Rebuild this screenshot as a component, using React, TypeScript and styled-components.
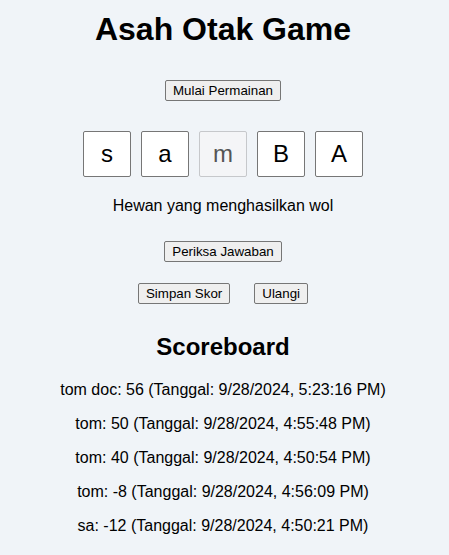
import React, { useState } from "react";
import styled, { createGlobalStyle } from "styled-components";

const GlobalStyle = createGlobalStyle`
  html, body {
    margin: 0;
    padding: 0;
    background: #f0f4f8;
  }
  body {
    font-family: "Liberation Sans", Arial, sans-serif;
    color: #000;
  }
`;

const Page = styled.div`
  box-sizing: border-box;
  width: 446px;
  padding-top: 11px;
  text-align: center;
  font-family: "Liberation Sans", Arial, sans-serif;
`;

const Title = styled.h1`
  margin: 0 0 32px;
  font-size: 32px;
  line-height: 37px;
  font-weight: bold;
`;

const Row = styled.div<{ $gap?: number; $mb?: number }>`
  display: flex;
  justify-content: center;
  gap: ${(p) => p.$gap ?? 0}px;
  margin-bottom: ${(p) => p.$mb ?? 0}px;
`;

const Button = styled.button`
  box-sizing: border-box;
  height: 21px;
  padding: 2px 7px;
  border: 1px solid #767676;
  border-radius: 2px;
  background: #efefef;
  color: #000;
  font-family: "Liberation Sans", Arial, sans-serif;
  font-size: 13.333px;
  line-height: 15px;
  cursor: pointer;
`;

const LetterBox = styled.input`
  box-sizing: border-box;
  width: 48px;
  height: 46px;
  padding: 0;
  border: 1px solid #767676;
  border-radius: 2px;
  background: #ffffff;
  color: #000;
  font-family: "Liberation Sans", Arial, sans-serif;
  font-size: 24px;
  text-align: center;
  &:disabled {
    background: #f4f5f7;
    border-color: #c6c8cb;
    color: #555;
  }
`;

const Hint = styled.p`
  margin: 20px 0 26px;
  font-size: 16px;
  line-height: 18px;
`;

const Subtitle = styled.h2`
  margin: 29px 0 20px;
  font-size: 24px;
  line-height: 28px;
  font-weight: bold;
`;

const ScoreList = styled.div`
  display: flex;
  flex-direction: column;
  gap: 16px;
`;

const ScoreLine = styled.p`
  margin: 0;
  font-size: 16px;
  line-height: 18px;
`;

const letters = [
  { ch: "s", disabled: false },
  { ch: "a", disabled: false },
  { ch: "m", disabled: true },
  { ch: "B", disabled: false },
  { ch: "A", disabled: false },
];

const scores = [
  "tom doc: 56 (Tanggal: 9/28/2024, 5:23:16 PM)",
  "tom: 50 (Tanggal: 9/28/2024, 4:55:48 PM)",
  "tom: 40 (Tanggal: 9/28/2024, 4:50:54 PM)",
  "tom: -8 (Tanggal: 9/28/2024, 4:56:09 PM)",
  "sa: -12 (Tanggal: 9/28/2024, 4:50:21 PM)",
];

export default function App() {
  const [vals, setVals] = useState(letters.map((l) => l.ch));
  return (
    <>
      <GlobalStyle />
      <Page>
        <Title>Asah Otak Game</Title>
        <Row $mb={30}>
          <Button>Mulai Permainan</Button>
        </Row>
        <Row $gap={10}>
          {letters.map((l, i) => (
            <LetterBox
              key={i}
              value={vals[i]}
              disabled={l.disabled}
              maxLength={1}
              onChange={(e) => {
                const next = [...vals];
                next[i] = e.target.value;
                setVals(next);
              }}
            />
          ))}
        </Row>
        <Hint>Hewan yang menghasilkan wol</Hint>
        <Row $mb={21}>
          <Button>Periksa Jawaban</Button>
        </Row>
        <Row $gap={24}>
          <Button>Simpan Skor</Button>
          <Button>Ulangi</Button>
        </Row>
        <Subtitle>Scoreboard</Subtitle>
        <ScoreList>
          {scores.map((s) => (
            <ScoreLine key={s}>{s}</ScoreLine>
          ))}
        </ScoreList>
      </Page>
    </>
  );
}
